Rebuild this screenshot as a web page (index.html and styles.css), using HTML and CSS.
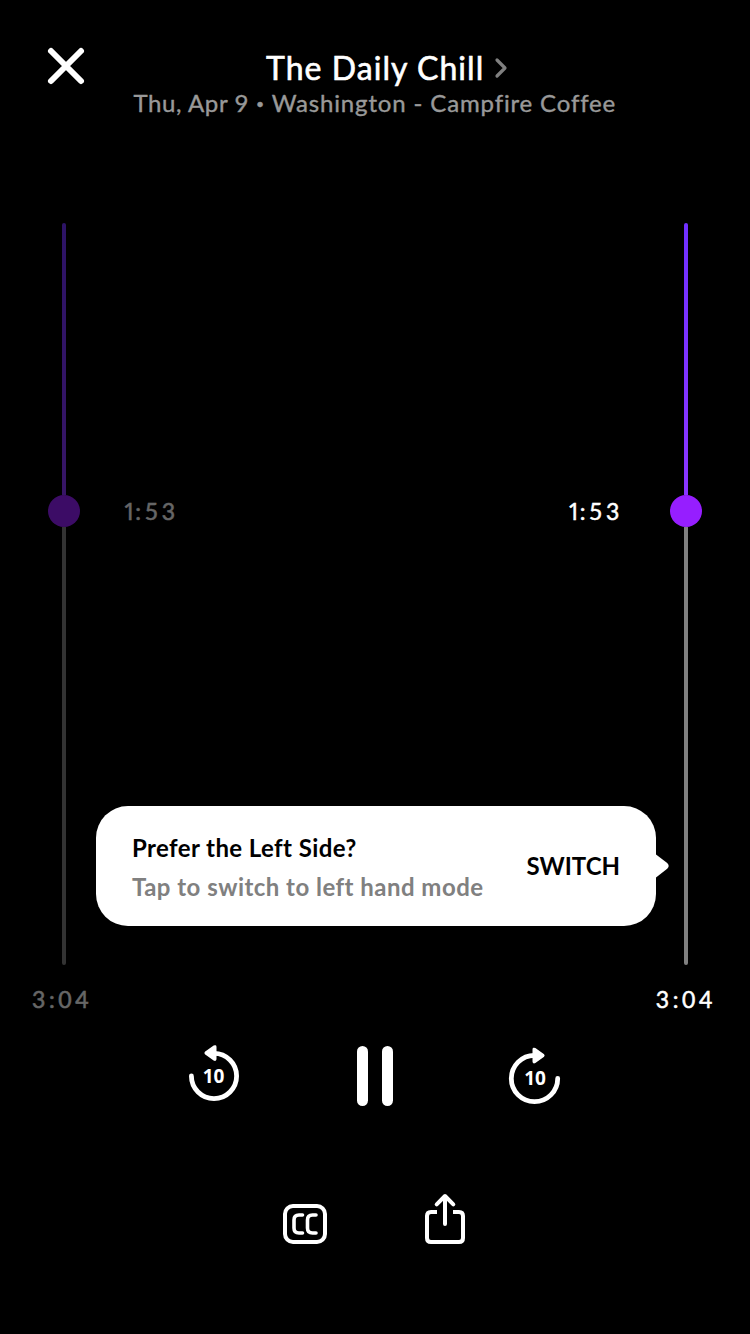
FILE: index.html
```html
<!DOCTYPE html>
<html lang="en">
<head>
<meta charset="utf-8">
<title>The Daily Chill</title>
<link rel="stylesheet" href="styles.css">
</head>
<body>
<main class="player">
  <header class="header">
    <svg class="close" viewBox="0 0 36 36"><path d="M3 3 33 33M33 3 3 33"/></svg>
    <div class="heading">
      <h1 class="title"><span class="title-text">The Daily Chill</span><svg class="chevron" viewBox="0 0 12 20"><path d="M2 2 10 10 2 18"/></svg></h1>
      <p class="subtitle"><span class="subtitle-text"><span class="date">Thu, Apr 9</span> <span class="bullet">•</span> Washington - Campfire Coffee</span></p>
    </div>
  </header>
  <section class="timelines">
    <div class="timeline timeline-left">
      <div class="elapsed"></div>
      <div class="position"><span class="knob"></span><span class="time"><span class="one">1</span>:53</span></div>
      <div class="remaining"></div>
      <span class="time total">3:04</span>
    </div>
    <div class="timeline timeline-right">
      <div class="elapsed"></div>
      <div class="position"><span class="time"><span class="one">1</span>:53</span><span class="knob"></span></div>
      <div class="remaining"></div>
      <span class="time total">3:04</span>
    </div>
    <aside class="tip">
      <div class="tip-copy">
        <p class="tip-title">Prefer the Left Side?</p>
        <p class="tip-text">Tap to switch to left hand mode</p>
      </div>
      <span class="tip-action">SWITCH</span>
      <svg class="tip-arrow" viewBox="0 0 13 24"><path d="M0 0.5 11.2 9Q14.2 12 11.2 14.7L0 23.5Z"/></svg>
    </aside>
  </section>
  <nav class="controls">
    <svg class="skip" viewBox="0 0 60 60">
      <path class="ring" d="M6.4 30A22.6 22.6 0 1 0 29 7.4"/>
      <path class="head" d="M20.8 6.2 29.2 .4Q30.5 -.2 30.5 1V13Q30.5 14.4 29.2 13.6L20.8 7.8Q20 7 20.8 6.2Z"/>
      <text x="28.5" y="37.4" text-anchor="middle">10</text>
    </svg>
    <svg class="pause" viewBox="0 0 36 60"><rect width="11" height="60" rx="5.5"/><rect x="25" width="11" height="60" rx="5.5"/></svg>
    <svg class="skip" viewBox="0 0 60 60">
      <path class="ring" d="M52.7 32.5A23.2 23.2 0 1 1 29.5 9.3"/>
      <path class="head" d="M38.2 8.7 29.8 2.9Q28.5 2.3 28.5 3.5V15.5Q28.5 16.9 29.8 16.1L38.2 10.3Q39 9.5 38.2 8.7Z"/>
      <text x="30" y="38.8" text-anchor="middle">10</text>
    </svg>
  </nav>
  <footer class="actions">
    <svg class="captions" viewBox="0 0 44 40"><rect x="2" y="2" width="40" height="36" rx="8"/><path d="M19.5 11H16Q11 11 11 16V24Q11 29 16 29H19.5M33 11H29.5Q24.5 11 24.5 16V24Q24.5 29 29.5 29H33"/></svg>
    <svg class="share" viewBox="0 0 42 52"><path d="M21 30V3.5M12.7 10.3 21 2 29.3 10.3"/><path class="box" d="M13 18H7Q3 18 3 22V44Q3 48 7 48H35Q39 48 39 44V22Q39 18 35 18H29"/></svg>
  </footer>
</main>
</body>
</html>
```

FILE: styles.css
```css
* { box-sizing: border-box; }
body {
  margin: 0;
  background: #000;
  color: #fff;
  font-family: Lato, "Open Sans", sans-serif;
  font-weight: 400;
}
h1, p { margin: 0; font-weight: inherit; }
svg { display: block; overflow: visible; flex: none; }
.player { width: 750px; height: 1334px; overflow: hidden; }
.header {
  display: grid;
  grid-template-columns: 36px 1fr 36px;
  height: 223px;
  padding: 48px 48px 0;
}
.close { width: 36px; height: 36px; fill: none; stroke: #fff; stroke-width: 6; stroke-linecap: round; }
.heading { display: flex; flex-direction: column; align-items: center; }
.title {
  display: flex;
  align-items: center;
  gap: 11px;
  height: 40px;
  padding-left: 23px;
  font-size: 32px;
  line-height: 40px;
  white-space: nowrap;
}
.title-text { width: 218px; letter-spacing: 1.05px; -webkit-text-stroke: .6px currentColor; }
.chevron { width: 12px; height: 20px; fill: none; stroke: #808080; stroke-width: 3.2; stroke-linecap: round; stroke-linejoin: round; }
.subtitle {
  display: flex;
  color: #999;
  font-size: 24px;
  line-height: 29px;
  white-space: nowrap;
}
.subtitle-text { width: 483px; letter-spacing: .85px; -webkit-text-stroke: .4px currentColor; }
.date { letter-spacing: .6px; }
.bullet { font-size: 14px; line-height: 1; vertical-align: 3px; }
.timelines {
  position: relative;
  display: flex;
  justify-content: space-between;
  height: 809px;
  padding: 0 48px;
}
.timeline { display: flex; flex-direction: column; width: 160px; }
.timeline-left { align-items: flex-start; opacity: .4; }
.timeline-right { align-items: flex-end; }
.elapsed {
  width: 4px;
  height: 272px;
  margin: 0 14px;
  border-radius: 2px 2px 0 0;
  background: linear-gradient(#7030ff, #8a36ff);
}
.remaining { width: 4px; height: 438px; margin: 0 14px; border-radius: 0 0 2px 2px; background: #808080; }
.position { display: flex; align-items: center; height: 32px; gap: 43px; }
.timeline-right .position { gap: 47px; }
.knob { width: 32px; height: 32px; border-radius: 50%; background: #961eff; }
.time { font-size: 23px; line-height: 32px; letter-spacing: 3.6px; -webkit-text-stroke: .5px currentColor; }
.one { font-family: "Noto Sans", sans-serif; line-height: 1; letter-spacing: -.8px; }
.total { margin: 18px -16px 0; }
.timeline-right .total { margin-right: -14px; }
.tip {
  position: absolute;
  top: 583px;
  left: 96px;
  display: flex;
  align-items: center;
  justify-content: space-between;
  width: 560px;
  height: 120px;
  padding: 0 36px;
  border-radius: 32px;
  background: #fff;
  color: #000;
  font-size: 24px;
  font-weight: 700;
  white-space: nowrap;
}
.tip-copy { display: grid; gap: 9px; padding-top: 2px; line-height: 30px; }
.tip-title { letter-spacing: .4px; }
.tip-text { color: #808080; letter-spacing: .47px; }
.tip-action { padding-bottom: 2px; letter-spacing: 0; }
.tip-arrow { position: absolute; left: 100%; top: 48px; width: 13px; height: 24px; fill: #fff; }
.controls {
  display: flex;
  justify-content: space-between;
  align-items: center;
  height: 88px;
  padding: 0 185px;
}
.skip { width: 60px; height: 60px; fill: #fff; }
.skip .ring { fill: none; stroke: #fff; stroke-width: 4.8; stroke-linecap: round; }
.skip .head { stroke: #fff; stroke-width: 2; stroke-linejoin: round; }
.skip text { font: 700 19px "Noto Sans", sans-serif; }
.pause { width: 36px; height: 60px; fill: #fff; }
.actions { display: flex; justify-content: center; align-items: flex-start; gap: 97px; height: 214px; padding: 74px 2px 0 0; }
.actions svg { fill: none; stroke: #fff; stroke-linecap: round; stroke-linejoin: round; }
.captions { width: 44px; height: 40px; margin-top: 10px; stroke-width: 4; }
.actions .captions path { stroke-width: 3.6; }
.share { width: 42px; height: 52px; stroke-width: 4; }
.actions .box { stroke-linecap: butt; }
```
